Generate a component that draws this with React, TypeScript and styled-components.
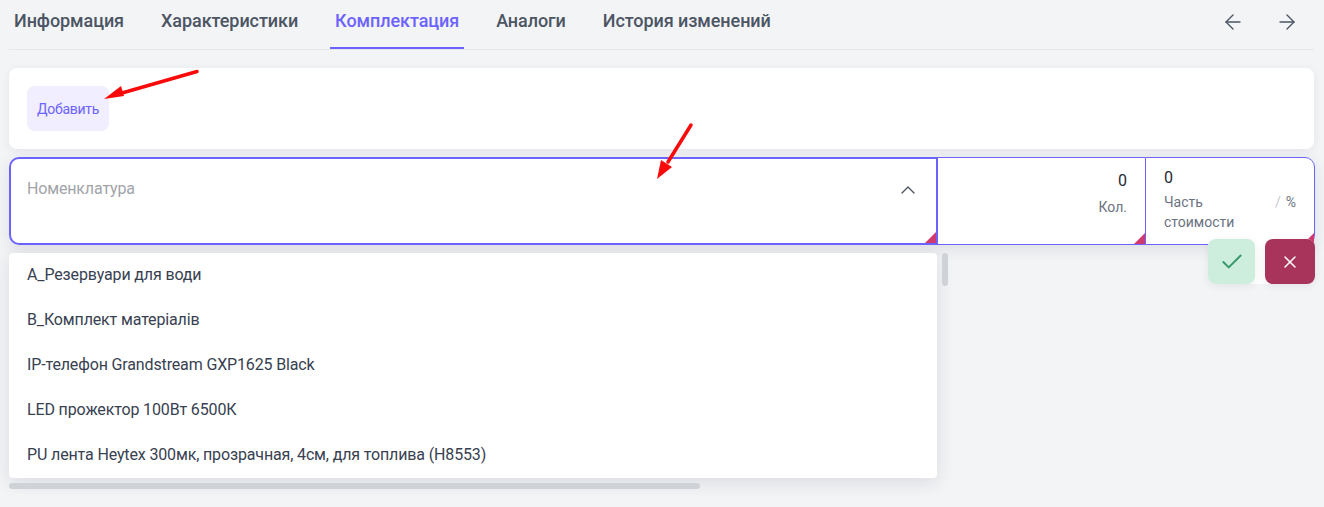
import styled, { createGlobalStyle } from "styled-components"
import { ArrowLeft, ArrowRight, Check, ChevronUp, X } from "lucide-react"

const tabs = ["Информация", "Характеристики", "Комплектация", "Аналоги", "История изменений"]
const items = [
  "A_Резервуари для води",
  "B_Комплект матеріалів",
  "IP-телефон Grandstream GXP1625 Black",
  "LED прожектор 100Вт 6500К",
  "PU лента Heytex 300мк, прозрачная, 4см, для топлива (H8553)",
]

const GlobalStyle = createGlobalStyle`
  html, body {
    margin: 0;
    height: 100%;
    background: #f3f4f6;
    overflow: hidden;
  }
  body {
    font-family: Roboto, "Noto Sans", sans-serif;
    color: #1f2a37;
  }
`

const Page = styled.div`
  position: relative;
  width: 1324px;
  height: 507px;
  box-sizing: border-box;
  padding: 0 9px;
`

const TabBar = styled.div`
  display: flex;
  align-items: stretch;
  justify-content: space-between;
  height: 50px;
  width: 1305px;
  box-sizing: border-box;
  border-bottom: 1px solid #e5e7eb;
`

const TabList = styled.div`
  display: flex;
  gap: 27px;
`

const Tab = styled.div<{ $active?: boolean }>`
  display: flex;
  align-items: flex-start;
  box-sizing: border-box;
  height: 49px;
  padding: 11px 5px 0;
  font-size: 18px;
  line-height: 20px;
  font-weight: 500;
  letter-spacing: -0.07px;
  color: ${(p) => (p.$active ? "#6c63ff" : "#4b5563")};
  border-bottom: 2px solid ${(p) => (p.$active ? "#6c63ff" : "transparent")};
`

const NavArrows = styled.div`
  display: flex;
  gap: 30px;
  padding: 10px 15px 0 0;
  color: #4b5563;
`

const ToolCard = styled.div`
  width: 1305px;
  height: 81px;
  box-sizing: border-box;
  margin-top: 18px;
  padding: 18px;
  background: #fff;
  border-radius: 8px;
  box-shadow: 0 2px 10px rgba(31, 41, 55, 0.07);
`

const AddButton = styled.button`
  display: block;
  width: 82px;
  height: 45px;
  padding: 0;
  border: none;
  border-radius: 8px;
  background: #f0eeff;
  color: #6c63ff;
  font-family: inherit;
  font-size: 14px;
  letter-spacing: -0.3px;
`

const FormRow = styled.div`
  display: flex;
  height: 88px;
  margin-top: 8px;
  background: #fff;
  border-radius: 10px;
  box-shadow: 0 4px 16px rgba(31, 41, 55, 0.1);
`

const Corner = styled.div`
  position: absolute;
  right: 0;
  bottom: 0;
  width: 0;
  height: 0;
  border-style: solid;
  border-width: 0 0 11px 11px;
  border-color: transparent transparent #d13a6e transparent;
`

const SelectField = styled.div`
  position: relative;
  display: flex;
  justify-content: space-between;
  width: 929px;
  box-sizing: border-box;
  padding: 20px 16px 0 16px;
  border: 2px solid #6c63ff;
  border-radius: 10px 0 0 10px;
`

const Placeholder = styled.span`
  font-size: 16px;
  line-height: 19px;
  letter-spacing: -0.15px;
  color: #a1a4a9;
`

const ChevronBox = styled.div`
  margin-top: -1px;
  color: #4b5563;
`

const QtyField = styled.div`
  position: relative;
  width: 207px;
  box-sizing: border-box;
  padding: 13px 18px 0 0;
  text-align: right;
  border-top: 1px solid #6c63ff;
  border-bottom: 1px solid #6c63ff;
`

const Value = styled.div`
  font-size: 16px;
  line-height: 19px;
  color: #1f2a37;
`

const FieldLabel = styled.div`
  margin-top: 7px;
  font-size: 14px;
  line-height: 20px;
  color: #6b7280;
`

const ShareField = styled.div`
  position: relative;
  flex: 1;
  box-sizing: border-box;
  padding: 10px 18px 0;
  border: 1px solid #6c63ff;
  border-radius: 0 10px 10px 0;
`

const ShareLabelRow = styled.div`
  display: flex;
  justify-content: space-between;
  margin-top: 5px;
  font-size: 14px;
  line-height: 20px;
  color: #6b7280;
`

const ShareText = styled.span`
  width: 80px;
`

const Percent = styled.span`
  white-space: nowrap;
`

const Slash = styled.span`
  margin-right: 5px;
  color: #c4c8ce;
`

const ActionBar = styled.div`
  position: absolute;
  left: 1208px;
  top: 239px;
  display: flex;
  gap: 10px;
  background: #fff;
  border-radius: 8px;
`

const ActionButton = styled.button<{ $variant: "ok" | "cancel" }>`
  display: flex;
  align-items: center;
  justify-content: center;
  width: ${(p) => (p.$variant === "ok" ? "47px" : "50px")};
  height: 45px;
  padding: 0;
  border: none;
  border-radius: 8px;
  background: ${(p) => (p.$variant === "ok" ? "#cdeedd" : "#a8345c")};
  color: ${(p) => (p.$variant === "ok" ? "#38976a" : "#fff")};
  box-shadow: 0 2px 8px rgba(31, 41, 55, 0.08);
`

const DropWrap = styled.div`
  position: relative;
  margin-top: 8px;
  width: 928px;
`

const DropList = styled.div`
  height: 225px;
  background: #fff;
  border-radius: 4px;
  box-shadow: 0 4px 18px rgba(31, 41, 55, 0.12);
`

const DropItem = styled.div`
  box-sizing: border-box;
  height: 45px;
  padding: 12px 18px 0;
  font-size: 16px;
  line-height: 19px;
  letter-spacing: -0.14px;
  color: #374151;
`

const ScrollThumbY = styled.div`
  position: absolute;
  left: 933px;
  top: 0;
  width: 6px;
  height: 33px;
  border-radius: 3px;
  background: #cfd3d8;
`

const ScrollThumbX = styled.div`
  width: 691px;
  height: 6px;
  margin-top: 5px;
  border-radius: 3px;
  background: #cfd3d8;
`

const Annotation = styled.svg`
  position: absolute;
  left: 0;
  top: 0;
  pointer-events: none;
`

export default function App() {
  return (
    <Page>
      <GlobalStyle />
      <TabBar>
        <TabList>
          {tabs.map((t) => (
            <Tab key={t} $active={t === "Комплектация"}>
              {t}
            </Tab>
          ))}
        </TabList>
        <NavArrows>
          <ArrowLeft size={24} strokeWidth={1.4} />
          <ArrowRight size={24} strokeWidth={1.4} />
        </NavArrows>
      </TabBar>

      <ToolCard>
        <AddButton>Добавить</AddButton>
      </ToolCard>

      <FormRow>
        <SelectField>
          <Placeholder>Номенклатура</Placeholder>
          <ChevronBox>
            <ChevronUp size={24} strokeWidth={1.4} />
          </ChevronBox>
          <Corner />
        </SelectField>
        <QtyField>
          <Value>0</Value>
          <FieldLabel>Кол.</FieldLabel>
          <Corner />
        </QtyField>
        <ShareField>
          <Value>0</Value>
          <ShareLabelRow>
            <ShareText>Часть стоимости</ShareText>
            <Percent>
              <Slash>/</Slash>%
            </Percent>
          </ShareLabelRow>
          <Corner />
        </ShareField>
      </FormRow>

      <DropWrap>
        <DropList>
          {items.map((i) => (
            <DropItem key={i}>{i}</DropItem>
          ))}
        </DropList>
        <ScrollThumbY />
        <ScrollThumbX />
      </DropWrap>

      <ActionBar>
        <ActionButton $variant="ok">
          <Check size={26} strokeWidth={1.8} />
        </ActionButton>
        <ActionButton $variant="cancel">
          <X size={20} strokeWidth={1.8} />
        </ActionButton>
      </ActionBar>

      <Annotation width={1324} height={507} viewBox="0 0 1324 507">
        <line x1="197" y1="71.5" x2="122" y2="93" stroke="#f80a0a" strokeWidth="3.5" strokeLinecap="round" />
        <polygon points="104,99 121,86 124,96" fill="#f80a0a" />
        <line x1="691" y1="125" x2="668" y2="162" stroke="#f80a0a" strokeWidth="3.5" strokeLinecap="round" />
        <polygon points="657,179 661,160 672,167" fill="#f80a0a" />
      </Annotation>
    </Page>
  )
}
